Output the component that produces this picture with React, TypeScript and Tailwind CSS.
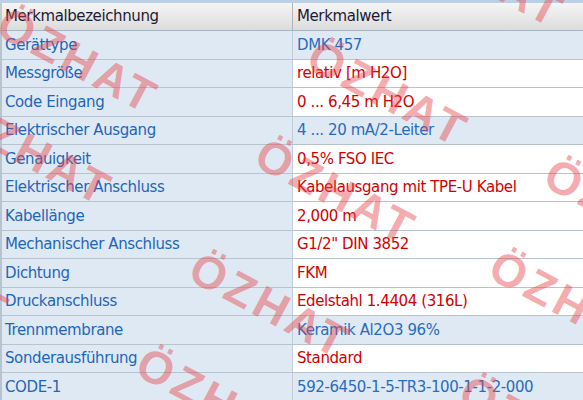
import React from 'react';

interface Row {
  label: string;
  value: string;
  red: boolean;
}

const rows: Row[] = [
  { label: 'Gerättype', value: 'DMK 457', red: false },
  { label: 'Messgröße', value: 'relativ [m H2O]', red: true },
  { label: 'Code Eingang', value: '0 ... 6,45 m H2O', red: true },
  { label: 'Elektrischer Ausgang', value: '4 ... 20 mA/2-Leiter', red: false },
  { label: 'Genauigkeit', value: '0,5% FSO IEC', red: true },
  { label: 'Elektrischer Anschluss', value: 'Kabelausgang mit TPE-U Kabel', red: true },
  { label: 'Kabellänge', value: '2,000 m', red: true },
  { label: 'Mechanischer Anschluss', value: 'G1/2" DIN 3852', red: true },
  { label: 'Dichtung', value: 'FKM', red: true },
  { label: 'Druckanschluss', value: 'Edelstahl 1.4404 (316L)', red: true },
  { label: 'Trennmembrane', value: 'Keramik Al2O3 96%', red: false },
  { label: 'Sonderausführung', value: 'Standard', red: true },
  { label: 'CODE-1', value: '592-6450-1-5-TR3-100-1-1-2-000', red: false },
];

// watermark positions (top-left of the rotated text box)
const marks = [
  { x: 12, y: -1 },
  { x: 322, y: 32 },
  { x: 418, y: -87 },
  { x: -34, y: 91 },
  { x: 270, y: 130 },
  { x: 559, y: 150 },
  { x: -137, y: 213 },
  { x: 204, y: 244 },
  { x: 504, y: 242 },
  { x: 151, y: 339 },
  { x: 474, y: 367 },
];

export default function App() {
  return (
    <div className="relative w-[583px] h-[400px] overflow-hidden bg-white font-['DejaVu_Sans',sans-serif] text-[15px] tracking-[-0.4px]">
      <div className="h-[3px] bg-[#bcd0e5]" />
      <div className="flex h-[28px] bg-gradient-to-b from-[#f5f5f5] to-[#dcdcdc] border-b border-[#a8b5c2] text-[#1d1b33]">
        <div className="w-[293px] shrink-0 border-r border-[#b4b4b4] border-l-2 border-l-[#c9c9c9] pl-[3px] flex items-center">
          Merkmalbezeichnung
        </div>
        <div className="flex-1 pl-[4px] flex items-center">Merkmalwert</div>
      </div>
      {rows.map((r, i) => (
        <div key={i} className="flex h-[28.5px] border-b border-[#b7c3cf]">
          <div className="w-[293px] shrink-0 bg-[#dee9f4] border-r border-[#c0ccd8] border-l-2 border-l-[#b7c3cf] pl-[3px] flex items-center text-[#1f66b9]">
            {r.label}
          </div>
          <div
            className={
              r.red
                ? 'flex-1 bg-white pl-[4px] flex items-center text-[#d20000]'
                : 'flex-1 bg-[#dee9f4] pl-[4px] flex items-center text-[#2a6cbe]'
            }
          >
            {r.value}
          </div>
        </div>
      ))}
      <div className="absolute inset-0 pointer-events-none">
        {marks.map((m, i) => (
          <span
            key={i}
            className="absolute origin-top-left rotate-[28deg] font-['Liberation_Sans',sans-serif] font-bold text-[46px] leading-none tracking-[4px] text-[#e8434a]/45 whitespace-nowrap"
            style={{ left: m.x, top: m.y }}
          >
            ÖZHAT
          </span>
        ))}
      </div>
    </div>
  );
}
